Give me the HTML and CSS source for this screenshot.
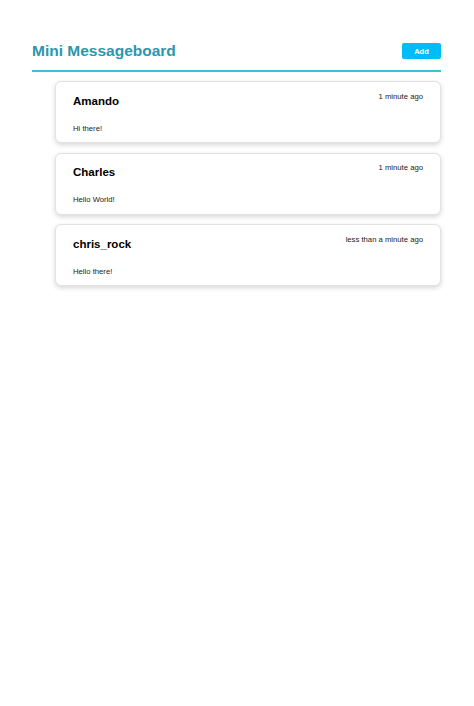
FILE: index.html
```html
<!DOCTYPE html>
<html lang="en">
<head>
<meta charset="utf-8">
<title>Mini Messageboard</title>
<link rel="stylesheet" href="styles.css">
</head>
<body>
<div class="page">
  <header class="topbar">
    <h1 class="title">Mini Messageboard</h1>
    <button class="add-btn">Add</button>
  </header>
  <main class="messages">
    <article class="card">
      <div class="card-head">
        <h2 class="name">Amando</h2>
        <span class="time">1 minute ago</span>
      </div>
      <p class="text">Hi there!</p>
    </article>
    <article class="card">
      <div class="card-head">
        <h2 class="name">Charles</h2>
        <span class="time">1 minute ago</span>
      </div>
      <p class="text">Hello World!</p>
    </article>
    <article class="card">
      <div class="card-head">
        <h2 class="name">chris_rock</h2>
        <span class="time">less than a minute ago</span>
      </div>
      <p class="text">Hello there!</p>
    </article>
  </main>
</div>
</body>
</html>
```
FILE: styles.css
```css
html, body {
  margin: 0;
  padding: 0;
  background: #ffffff;
}
body {
  font-family: "Liberation Sans", Arial, sans-serif;
  color: #111;
  min-height: 706px;
}
.page {
  padding: 41px 33px 20px 32px;
}
.topbar {
  display: flex;
  align-items: center;
  justify-content: space-between;
  padding-bottom: 9px;
  border-bottom: 2px solid #3fc0da;
}
.title {
  margin: 0;
  font-size: 15.5px;
  line-height: 20px;
  font-weight: 700;
  color: #2a97ad;
}
.add-btn {
  width: 39px;
  height: 16px;
  padding: 0;
  border: none;
  border-radius: 2px;
  background: #00bdf8;
  color: #fff;
  font-family: "Liberation Sans", Arial, sans-serif;
  font-weight: 700;
  font-size: 7.5px;
}
.messages {
  display: flex;
  flex-direction: column;
  gap: 9.5px;
  margin: 9px 0 0 23px;
}
.card {
  border: 1px solid #e2e2e2;
  border-radius: 6px;
  box-shadow: 0 2px 5px rgba(0, 0, 0, 0.16);
  padding: 9.5px 17px 8.5px 17px;
  background: #fff;
}
.card-head {
  display: flex;
  justify-content: space-between;
  align-items: flex-start;
  height: 16px;
}
.name {
  margin: 2px 0 0;
  font-size: 11.5px;
  line-height: 14px;
  font-weight: 700;
  color: #000;
}
.time {
  font-size: 7.7px;
  line-height: 10px;
  color: #222;
}
.text {
  margin: 16px 0 0;
  font-size: 7.7px;
  line-height: 10px;
  color: #222;
}
```
